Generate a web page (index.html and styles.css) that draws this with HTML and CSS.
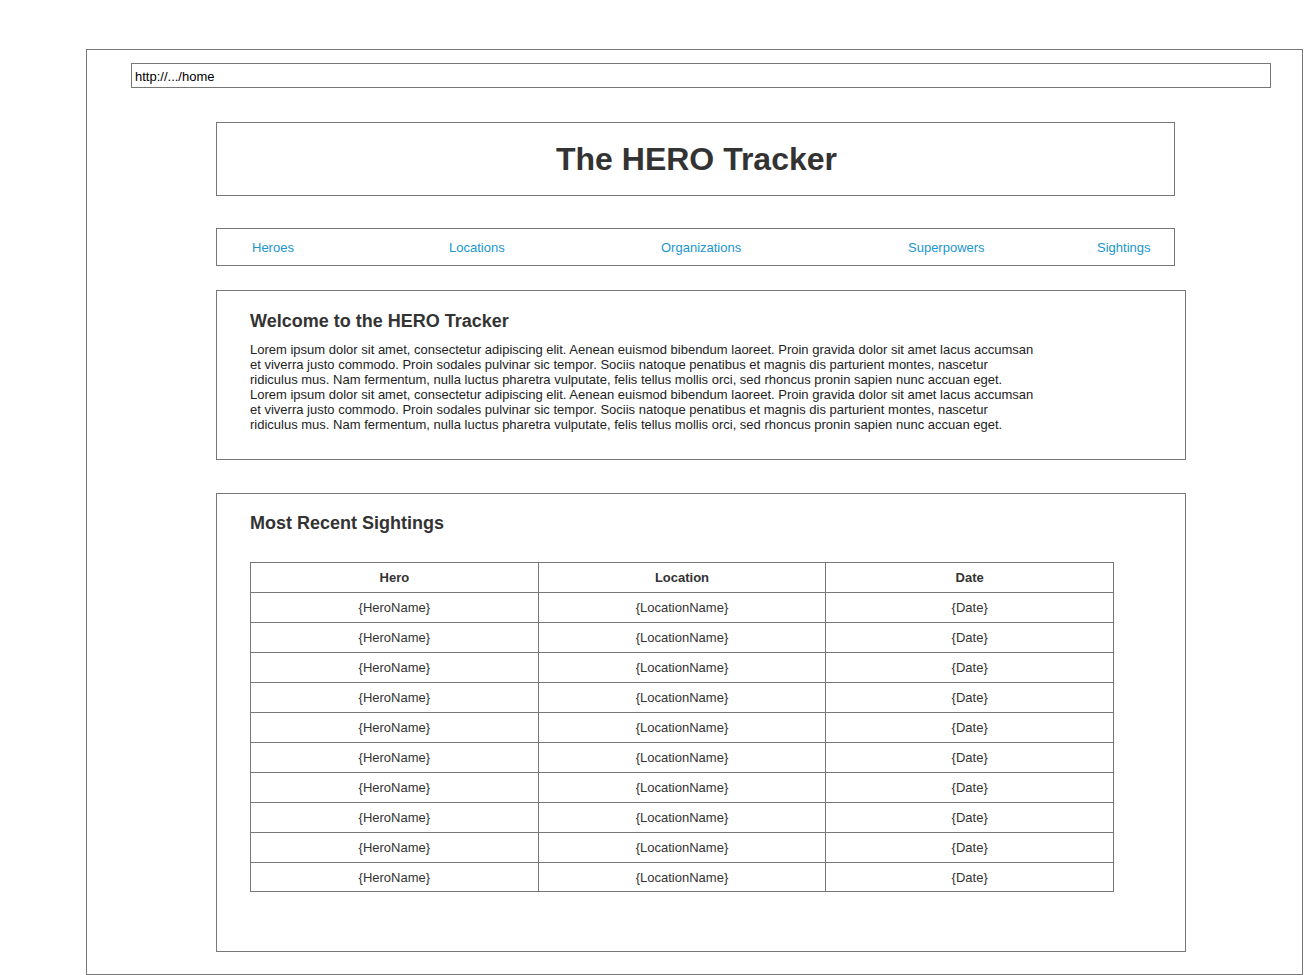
FILE: index.html
```html
<!DOCTYPE html>
<html>
<head>
<meta charset="utf-8">
<title>The HERO Tracker</title>
<link rel="stylesheet" href="styles.css">
</head>
<body>
<div class="frame">
  <div class="url">http://.../home</div>
  <div class="content">
    <header class="title-box"><h1>The HERO Tracker</h1></header>
    <nav class="nav">
      <a href="#">Heroes</a>
      <a href="#">Locations</a>
      <a href="#">Organizations</a>
      <a href="#">Superpowers</a>
      <a href="#">Sightings</a>
    </nav>
    <section class="panel welcome">
      <h2>Welcome to the HERO Tracker</h2>
      <p>Lorem ipsum dolor sit amet, consectetur adipiscing elit. Aenean euismod bibendum laoreet. Proin gravida dolor sit amet lacus accumsan<br>et viverra justo commodo. Proin sodales pulvinar sic tempor. Sociis natoque penatibus et magnis dis parturient montes, nascetur<br>ridiculus mus. Nam fermentum, nulla luctus pharetra vulputate, felis tellus mollis orci, sed rhoncus pronin sapien nunc accuan eget.<br>Lorem ipsum dolor sit amet, consectetur adipiscing elit. Aenean euismod bibendum laoreet. Proin gravida dolor sit amet lacus accumsan<br>et viverra justo commodo. Proin sodales pulvinar sic tempor. Sociis natoque penatibus et magnis dis parturient montes, nascetur<br>ridiculus mus. Nam fermentum, nulla luctus pharetra vulputate, felis tellus mollis orci, sed rhoncus pronin sapien nunc accuan eget.</p>
    </section>
    <section class="panel sightings">
      <h2>Most Recent Sightings</h2>
      <table>
        <thead>
          <tr><th>Hero</th><th>Location</th><th>Date</th></tr>
        </thead>
        <tbody>
          <tr><td>{HeroName}</td><td>{LocationName}</td><td>{Date}</td></tr>
          <tr><td>{HeroName}</td><td>{LocationName}</td><td>{Date}</td></tr>
          <tr><td>{HeroName}</td><td>{LocationName}</td><td>{Date}</td></tr>
          <tr><td>{HeroName}</td><td>{LocationName}</td><td>{Date}</td></tr>
          <tr><td>{HeroName}</td><td>{LocationName}</td><td>{Date}</td></tr>
          <tr><td>{HeroName}</td><td>{LocationName}</td><td>{Date}</td></tr>
          <tr><td>{HeroName}</td><td>{LocationName}</td><td>{Date}</td></tr>
          <tr><td>{HeroName}</td><td>{LocationName}</td><td>{Date}</td></tr>
          <tr><td>{HeroName}</td><td>{LocationName}</td><td>{Date}</td></tr>
          <tr><td>{HeroName}</td><td>{LocationName}</td><td>{Date}</td></tr>
        </tbody>
      </table>
    </section>
  </div>
</div>
</body>
</html>
```

FILE: styles.css
```css
* { box-sizing: border-box; }
html, body { margin: 0; padding: 0; background: #fff; }
body {
  font-family: "Liberation Sans", Arial, sans-serif;
  color: #333;
  font-size: 13px;
}
.frame {
  margin: 49px 0 0 86px;
  width: 1217px;
  height: 926px;
  border: 1px solid #777;
  padding: 13px 0 0 44px;
  overflow: hidden;
}
.url {
  width: 1140px;
  height: 25px;
  border: 1px solid #777;
  color: #000;
  font-size: 13px;
  line-height: 23px;
  padding: 1px 0 0 3px;
}
.content {
  padding-left: 85px;
  padding-top: 34px;
  display: flex;
  flex-direction: column;
  align-items: flex-start;
}
.title-box {
  width: 959px;
  height: 74px;
  border: 1px solid #777;
  display: flex;
  align-items: center;
  justify-content: center;
}
.title-box h1 {
  margin: 0;
  font-size: 32px;
  font-weight: bold;
  color: #333;
  padding: 1px 0 0 2px;
}
.nav {
  margin-top: 32px;
  width: 959px;
  height: 38px;
  border: 1px solid #777;
  display: grid;
  grid-template-columns: 197px 212px 247px 189px auto;
  align-items: center;
  padding-left: 35px;
  padding-top: 1px;
}
.nav a {
  color: #1a96d0;
  text-decoration: none;
  font-size: 13px;
}
.panel {
  width: 970px;
  border: 1px solid #777;
  padding-left: 33px;
}
.panel h2 {
  margin: 0;
  font-size: 18px;
  font-weight: bold;
  color: #333;
}
.welcome {
  margin-top: 24px;
  height: 170px;
  padding-top: 20px;
}
.welcome p {
  margin: 10px 0 0;
  font-size: 13px;
  line-height: 15px;
  color: #222;
}
.sightings {
  margin-top: 33px;
  height: 459px;
  padding-top: 19px;
}
.sightings h2 { height: 49px; }
table {
  width: 864px;
  border-collapse: collapse;
  table-layout: fixed;
  font-size: 13px;
  color: #333;
}
th, td {
  border: 1px solid #777;
  height: 30px;
  text-align: center;
  padding: 0;
}
tbody tr:last-child td { height: 29px; }
th { font-weight: bold; }
```
